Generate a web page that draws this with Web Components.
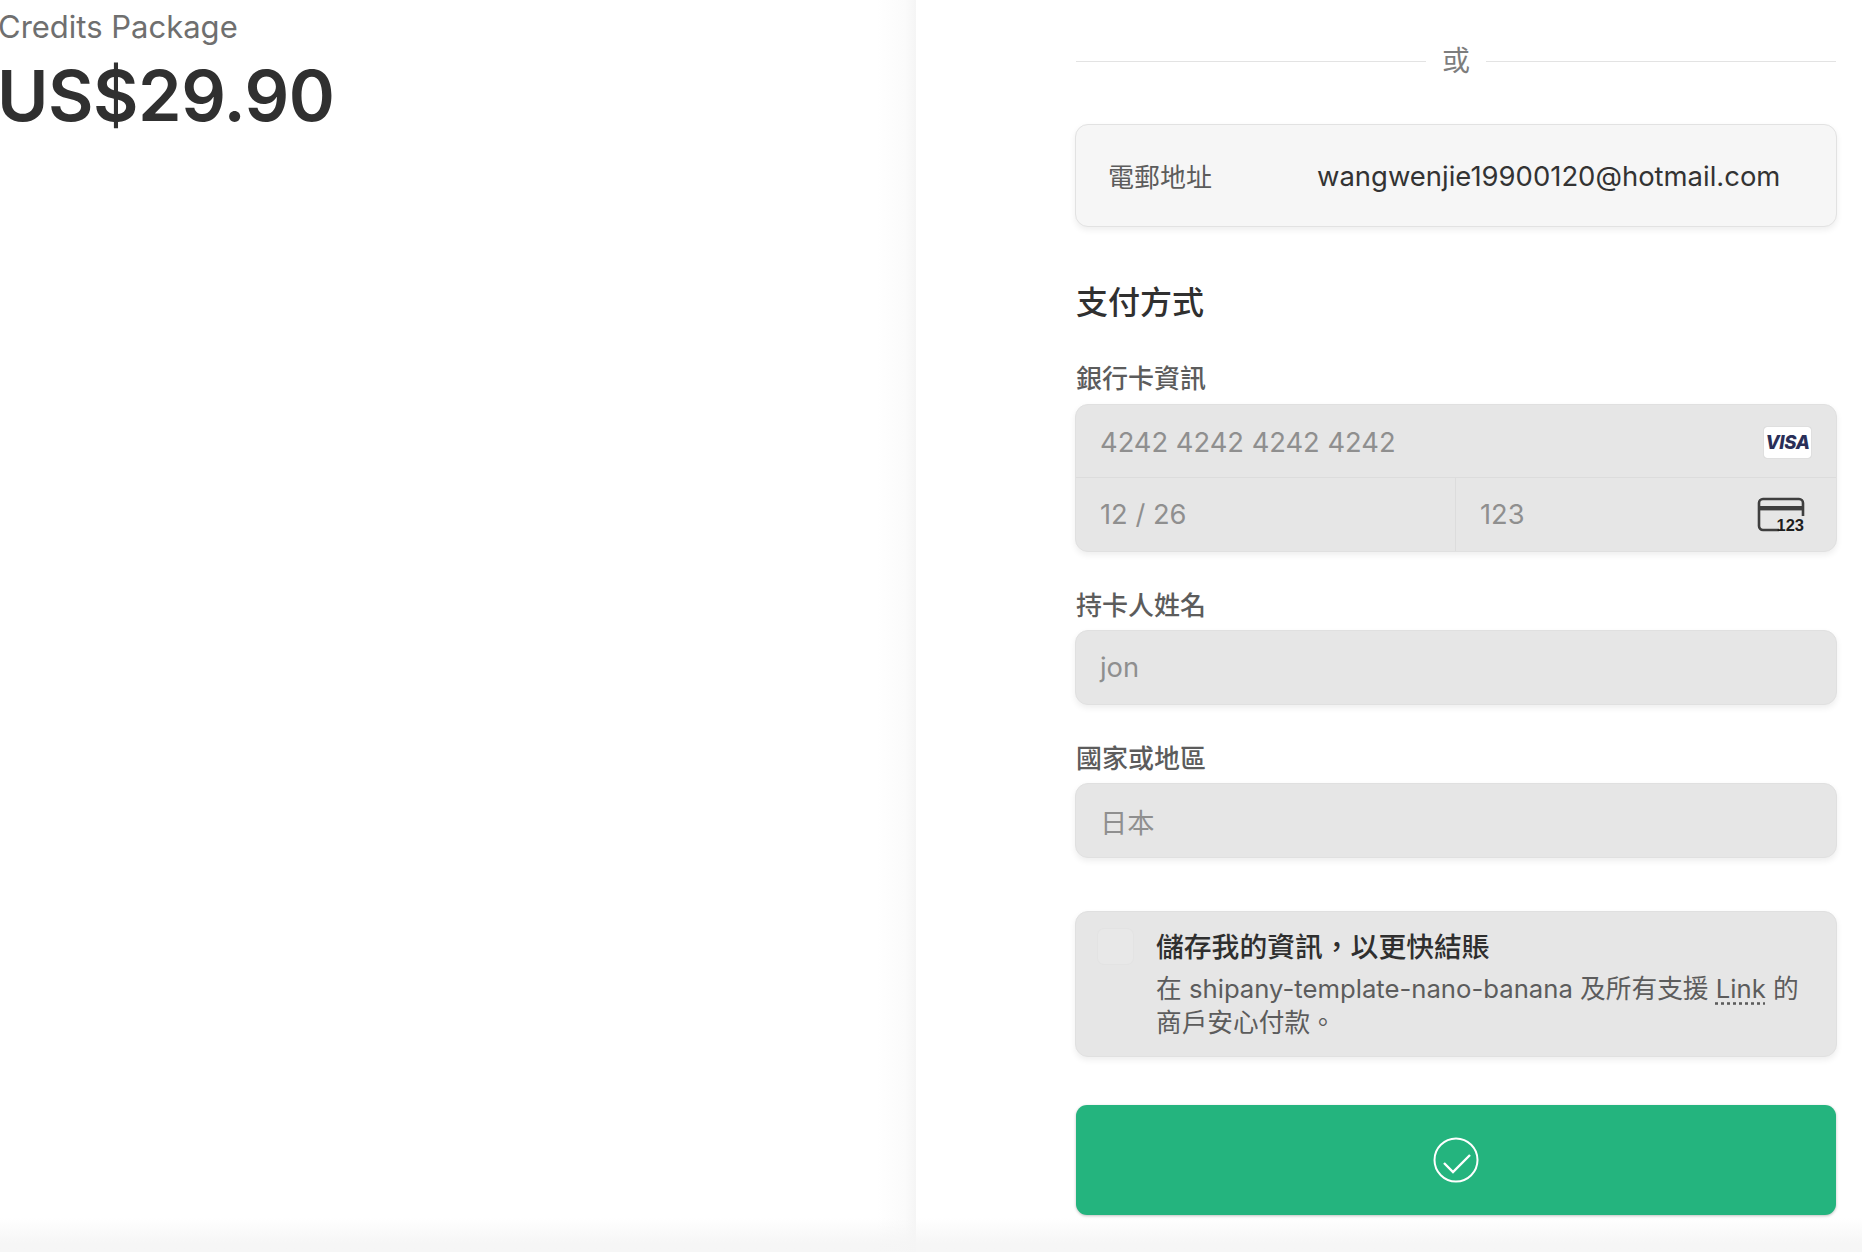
<!DOCTYPE html>
<html lang="zh-Hant">
<head>
<meta charset="utf-8">
<title>Checkout</title>
<style>
  html, body { margin: 0; height: 100%; background: #fff; overflow: hidden; }
  body { font-family: Inter, "Noto Sans CJK TC", sans-serif; }
</style>
</head>
<body>
<checkout-page>
  <order-summary slot="summary" name="Credits Package" price="US$29.90"></order-summary>
  <or-divider>或</or-divider>
  <email-row label="電郵地址">wangwenjie19900120@hotmail.com</email-row>
  <section-title>支付方式</section-title>
  <form-field label="銀行卡資訊">
    <card-input number="4242 4242 4242 4242" expiry="12 / 26" cvc="123"></card-input>
  </form-field>
  <form-field label="持卡人姓名">
    <text-box>jon</text-box>
  </form-field>
  <form-field label="國家或地區">
    <text-box>日本</text-box>
  </form-field>
  <save-box heading="儲存我的資訊，以更快結賬">在 shipany-template-nano-banana 及所有支援 <u>Link</u> 的商戶安心付款。</save-box>
  <pay-button></pay-button>
</checkout-page>

<script>
class CheckoutPage extends HTMLElement {
  constructor() {
    super();
    this.attachShadow({ mode: 'open' });
    this.shadowRoot.innerHTML = `
      <style>
        :host {
          display: grid;
          grid-template-columns: 916px 1fr;
          height: 1252px;
          position: relative;
          overflow: hidden;
          background: #fff;
        }
        .left {
          background: linear-gradient(to right, #fff 0, #fff 877px, #fbfbfb 905px, #f5f5f5 916px);
          overflow: hidden;
        }
        .right {
          display: flex;
          flex-direction: column;
          padding: 0 25px 0 159px;
        }
        .fade {
          position: absolute;
          left: 0;
          right: 0;
          bottom: 0;
          height: 34px;
          background: linear-gradient(to bottom, rgba(245,245,245,0), rgba(245,245,245,0.9) 75%);
          pointer-events: none;
        }
      </style>
      <div class="left"><slot name="summary"></slot></div>
      <div class="right"><slot></slot></div>
      <div class="fade"></div>
    `;
  }
}

class OrderSummary extends HTMLElement {
  constructor() {
    super();
    this.attachShadow({ mode: 'open' });
    this.shadowRoot.innerHTML = `
      <style>
        :host { display: block; margin-left: -2px; padding-top: 8px; }
        .name { font-size: 31px; line-height: 38px; font-weight: 400; color: #6f6f6f; }
        .price {
          margin-left: -1px;
          font-size: 70px;
          line-height: 80px;
          margin-top: 10px;
          font-weight: 600;
          letter-spacing: -0.5px;
          color: #303030;
        }
      </style>
      <div class="name">${this.getAttribute('name')}</div>
      <div class="price">${this.getAttribute('price')}</div>
    `;
  }
}

class OrDivider extends HTMLElement {
  constructor() {
    super();
    this.attachShadow({ mode: 'open' });
    this.shadowRoot.innerHTML = `
      <style>
        :host {
          display: flex;
          align-items: center;
          gap: 16px;
          height: 40px;
          margin: 41px 1px 0;
          font-size: 28px;
          line-height: 36px;
          color: #7d7d7d;
        }
        i { flex: 1; height: 1px; background: #e3e3e3; }
      </style>
      <i></i><span><slot></slot></span><i></i>
    `;
  }
}

class EmailRow extends HTMLElement {
  constructor() {
    super();
    this.attachShadow({ mode: 'open' });
    this.shadowRoot.innerHTML = `
      <style>
        :host {
          display: flex;
          align-items: center;
          box-sizing: border-box;
          height: 103px;
          margin-top: 43px;
          padding: 0 32px;
          background: #f6f6f6;
          border: 1px solid #e2e2e2;
          border-radius: 13px;
          box-shadow: 0 3px 6px rgba(0,0,0,0.07);
          font-size: 26px;
        }
        .label { width: 209px; color: #5c5c5c; }
        .value { color: #333; font-size: 27.45px; }
      </style>
      <span class="label">${this.getAttribute('label')}</span>
      <span class="value"><slot></slot></span>
    `;
  }
}

class SectionTitle extends HTMLElement {
  constructor() {
    super();
    this.attachShadow({ mode: 'open' });
    this.shadowRoot.innerHTML = `
      <style>
        :host {
          display: block;
          margin: 54px 1px 0;
          height: 44px;
          line-height: 44px;
          font-size: 32px;
          font-weight: 500;
          color: #303030;
        }
      </style>
      <slot></slot>
    `;
  }
}

class FormField extends HTMLElement {
  constructor() {
    super();
    this.attachShadow({ mode: 'open' });
    this.shadowRoot.innerHTML = `
      <style>
        :host { display: block; margin-top: 37px; }
        .label {
          height: 34px;
          line-height: 34px;
          margin: 0 1px 7px;
          font-size: 26px;
          font-weight: 500;
          color: #5c5c5c;
        }
      </style>
      <div class="label">${this.getAttribute('label')}</div>
      <slot></slot>
    `;
  }
}

class TextBox extends HTMLElement {
  constructor() {
    super();
    this.attachShadow({ mode: 'open' });
    this.shadowRoot.innerHTML = `
      <style>
        :host {
          display: flex;
          align-items: center;
          box-sizing: border-box;
          height: 75px;
          padding: 0 24px;
          background: #e6e6e6;
          border: 1px solid #e0e0e0;
          border-radius: 13px;
          box-shadow: 0 3px 6px rgba(0,0,0,0.07);
          font-size: 27.3px;
          color: #8f8f8f;
        }
      </style>
      <slot></slot>
    `;
  }
}

class CardInput extends HTMLElement {
  constructor() {
    super();
    this.attachShadow({ mode: 'open' });
    this.shadowRoot.innerHTML = `
      <style>
        :host {
          display: block;
          margin-top: 8px;
          background: #e6e6e6;
          border: 1px solid #e0e0e0;
          border-radius: 13px;
          box-shadow: 0 3px 6px rgba(0,0,0,0.07);
          font-size: 27.3px;
          color: #8f8f8f;
        }
        .row { display: flex; align-items: center; justify-content: space-between; box-sizing: border-box; height: 73px; padding: 2px 24px 0; }
        .number { border-bottom: 1px solid #dcdcdc; padding-right: 25px; }
        .split { display: grid; grid-template-columns: 380px 1fr; }
        .split .row { height: 73px; padding-top: 0; }
        .expiry { border-right: 1px solid #dcdcdc; }
        .cvc { padding-right: 29px; }
        .visa {
          display: flex;
          align-items: center;
          justify-content: center;
          width: 47px;
          height: 31px;
          background: #fff;
          border-radius: 3px;
          box-shadow: 0 0 1px rgba(0,0,0,0.3);
          font: italic 800 18.5px Inter, sans-serif;
          letter-spacing: -0.4px;
          color: #2a2f58;
        }
        svg { display: block; }
      </style>
      <div class="row number">
        <span>${this.getAttribute('number')}</span>
        <span class="visa">VISA</span>
      </div>
      <div class="split">
        <div class="row expiry"><span>${this.getAttribute('expiry')}</span></div>
        <div class="row cvc">
          <span>${this.getAttribute('cvc')}</span>
          <svg width="50" height="36" viewBox="0 0 50 36">
            <path d="M22 33H6a4 4 0 0 1-4-4V6a4 4 0 0 1 4-4h36a4 4 0 0 1 4 4v13" fill="none" stroke="#3f3f3f" stroke-width="2.6"/>
            <rect x="2" y="9" width="44" height="4.4" fill="#3f3f3f"/>
            <text x="47" y="34" text-anchor="end" font-family="Liberation Sans, sans-serif" font-size="16.5" font-weight="700" fill="#1d1d1d">123</text>
          </svg>
        </div>
      </div>
    `;
  }
}

class SaveBox extends HTMLElement {
  constructor() {
    super();
    this.attachShadow({ mode: 'open' });
    this.shadowRoot.innerHTML = `
      <style>
        :host {
          display: grid;
          grid-template-columns: 35px 1fr;
          column-gap: 23px;
          box-sizing: border-box;
          height: 146px;
          margin-top: 53px;
          padding: 17px 33px 0 22px;
          background: #e6e6e6;
          border: 1px solid #e0e0e0;
          border-radius: 13px;
          box-shadow: 0 3px 6px rgba(0,0,0,0.07);
        }
        .check {
          width: 35px;
          height: 35px;
          box-sizing: border-box;
          border-radius: 6px;
          background: #e8e8e8;
          box-shadow: 0 0 0 1px #e3e3e3;
        }
        .heading { font-size: 27.8px; line-height: 36px; font-weight: 500; color: #2f2f2f; }
        .text { margin-top: 7px; font-size: 25.7px; line-height: 34px; color: #5c5c5c; }
        ::slotted(u) { text-decoration: underline dotted; text-underline-offset: 4px; }
      </style>
      <div class="check"></div>
      <div>
        <div class="heading">${this.getAttribute('heading')}</div>
        <div class="text"><slot></slot></div>
      </div>
    `;
  }
}

class PayButton extends HTMLElement {
  constructor() {
    super();
    this.attachShadow({ mode: 'open' });
    this.shadowRoot.innerHTML = `
      <style>
        :host {
          display: flex;
          align-items: center;
          justify-content: center;
          height: 110px;
          margin: 48px 1px 0;
          background: #24b47e;
          border-radius: 11px;
          box-shadow: 0 1px 3px rgba(0,0,0,0.25);
        }
      </style>
      <svg width="46" height="46" viewBox="0 0 46 46" fill="none" stroke="#fff" stroke-width="2">
        <circle cx="23" cy="23" r="21.5"/>
        <path d="M11 26l9 9 17-17" stroke-width="2.4"/>
      </svg>
    `;
  }
}

customElements.define('checkout-page', CheckoutPage);
customElements.define('order-summary', OrderSummary);
customElements.define('or-divider', OrDivider);
customElements.define('email-row', EmailRow);
customElements.define('section-title', SectionTitle);
customElements.define('form-field', FormField);
customElements.define('text-box', TextBox);
customElements.define('card-input', CardInput);
customElements.define('save-box', SaveBox);
customElements.define('pay-button', PayButton);
</script>
</body>
</html>
